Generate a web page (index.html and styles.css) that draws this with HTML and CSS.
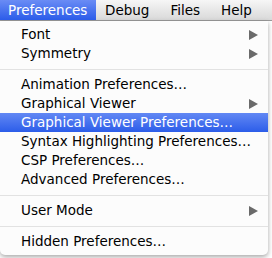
FILE: index.html
```html
<!DOCTYPE html>
<html>
<head>
<meta charset="utf-8">
<link rel="stylesheet" href="styles.css">
</head>
<body>
<div class="menubar">
  <div class="mb-item active">Preferences</div>
  <div class="mb-item">Debug</div>
  <div class="mb-item">Files</div>
  <div class="mb-item">Help</div>
</div>
<div class="menu">
  <div class="row sub">Font<span class="arrow"></span></div>
  <div class="row sub">Symmetry<span class="arrow"></span></div>
  <div class="sep"></div>
  <div class="row">Animation Preferences…</div>
  <div class="row sub">Graphical Viewer<span class="arrow"></span></div>
  <div class="row selected">Graphical Viewer Preferences…</div>
  <div class="row">Syntax Highlighting Preferences…</div>
  <div class="row">CSP Preferences…</div>
  <div class="row">Advanced Preferences…</div>
  <div class="sep"></div>
  <div class="row sub">User Mode<span class="arrow"></span></div>
  <div class="sep"></div>
  <div class="row">Hidden Preferences…</div>
</div>
</body>
</html>
```
FILE: styles.css
```css
html, body {
  margin: 0;
  padding: 0;
  background: #ffffff;
}
body {
  width: 272px;
  height: 258px;
  overflow: hidden;
  font-family: "DejaVu Sans", "Liberation Sans", sans-serif;
  font-size: 13.5px;
  color: #000;
}
.menubar {
  display: flex;
  height: 21px;
  background: linear-gradient(#f6f6f6, #d9d9d9);
  border-bottom: 1px solid #9a9a9a;
  box-sizing: border-box;
}
.mb-item {
  padding: 0 8px;
  line-height: 21px;
  margin-right: 5px;
}
.mb-item.active {
  color: #fff;
  background: linear-gradient(#6a8cf5, #2b5ce9);
  padding: 0 8px;
  margin-right: 1px;
  width: 80px;
}
.menu {
  width: 268px;
  padding: 4px 0;
  background: #fcfcfc;
  border-radius: 0 0 5px 5px;
  box-shadow: 0 2px 5px rgba(0,0,0,0.35);
}
.row {
  position: relative;
  height: 19px;
  line-height: 19px;
  padding-left: 21px;
  white-space: nowrap;
}
.row.selected {
  color: #fff;
  background: linear-gradient(#6288f4, #2c5de9);
}
.arrow {
  position: absolute;
  right: 10px;
  top: 5px;
  width: 0;
  height: 0;
  border-top: 5px solid transparent;
  border-bottom: 5px solid transparent;
  border-left: 9px solid #6a6a6a;
}
.sep {
  height: 1px;
  background: #e2e2e2;
  margin: 6px 0 5px;
}
```
